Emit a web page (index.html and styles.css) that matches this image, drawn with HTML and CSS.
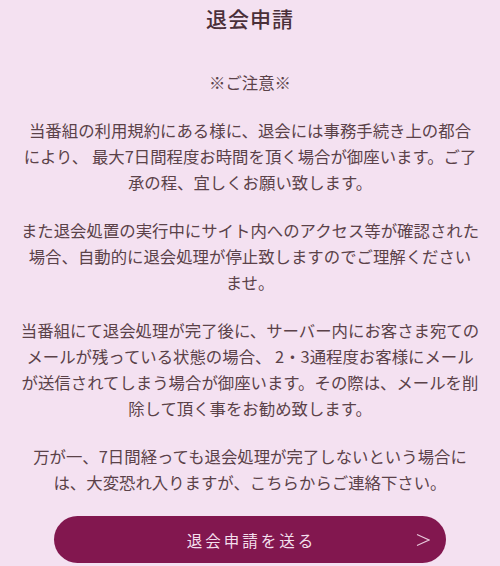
FILE: index.html
```html
<!DOCTYPE html>
<html lang="ja">
<head>
    <meta charset="UTF-8">
    <meta name="viewport" content="width=device-width, initial-scale=1.0">
    <title>退会申請</title>
    <link rel="stylesheet" href="styles.css">
</head>
<body>
    <div class="container">
        <h1 class="title">退会申請</h1>
        <div class="notice">
            <p>※ご注意※</p>
            <p>当番組の利用規約にある様に、退会には事務手続き上の都合<br>により、 最大7日間程度お時間を頂く場合が御座います。ご了<br>承の程、宜しくお願い致します。</p>
            <p>また退会処置の実行中にサイト内へのアクセス等が確認された<br>場合、自動的に退会処理が停止致しますのでご理解ください<br>ませ。</p>
            <p>当番組にて退会処理が完了後に、サーバー内にお客さま宛ての<br>メールが残っている状態の場合、 2・3通程度お客様にメール<br>が送信されてしまう場合が御座います。その際は、メールを削<br>除して頂く事をお勧め致します。</p>
            <p>万が一、7日間経っても退会処理が完了しないという場合に<br>は、大変恐れ入りますが、こちらからご連絡下さい。</p>
        </div>
        <button type="button" class="btn">
            <span class="btn-label">退会申請を送る</span>
            <svg class="btn-arrow" width="14" height="14" viewBox="0 0 14 14">
                <polyline points="1,1.5 13,7 1,12.5" fill="none" stroke="#e8c9dc" stroke-width="1.1"/>
            </svg>
        </button>
    </div>
</body>
</html>
```

FILE: styles.css
```css
* {
    box-sizing: border-box;
    margin: 0;
    padding: 0;
}

body {
    background: #f4e1f1;
    color: #5b4249;
    font-family: "Noto Sans CJK JP", "Noto Sans", sans-serif;
}

.container {
    padding: 3px 16px 0;
}

.title {
    text-align: center;
    font-size: 21px;
    line-height: 30px;
    font-weight: 500;
    letter-spacing: 1px;
    color: #4a2f39;
    margin-bottom: 36px;
}

.notice p {
    text-align: center;
    font-size: 16.4px;
    line-height: 26px;
    margin-bottom: 22px;
    white-space: nowrap;
}

.notice p:last-child {
    margin-bottom: 21px;
}

.btn {
    display: grid;
    grid-template-columns: 1fr auto 1fr;
    align-items: center;
    width: 392px;
    height: 47px;
    margin: 0 auto;
    border: none;
    border-radius: 24px;
    background: #82174f;
    color: #f3dfec;
    font-family: inherit;
    cursor: pointer;
}

.btn-label {
    grid-column: 2;
    font-size: 15.5px;
    letter-spacing: 3px;
    padding-left: 3px;
}

.btn-arrow {
    grid-column: 3;
    justify-self: end;
    margin-right: 16px;
    margin-top: 1px;
}
```
